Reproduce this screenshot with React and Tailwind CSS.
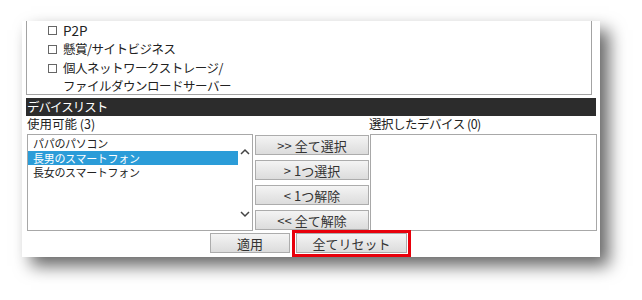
import React from "react";

const font = { fontFamily: '"Noto Sans CJK JP", "Noto Sans", sans-serif' };

const Btn = ({ children, className = "" }) => (
  <div
    className={
      "flex items-center justify-center border border-[#acacac] bg-gradient-to-b from-[#f4f4f4] to-[#dcdcdc] text-[13px] leading-none text-[#333] " +
      className
    }
  >
    {children}
  </div>
);

const Check = ({ children }) => (
  <div className="flex h-[19px] items-center">
    <span className="mr-[6px] inline-block h-[9px] w-[9px] border border-[#666] bg-white" />
    <span>{children}</span>
  </div>
);

const Chevron = ({ up }) => (
  <svg width="10" height="7" viewBox="0 0 10 7" className="block">
    <path
      d={up ? "M1 6 L5 2 L9 6" : "M1 1 L5 5 L9 1"}
      fill="none"
      stroke="#444"
      strokeWidth="1.5"
    />
  </svg>
);

export default function App() {
  return (
    <div className="h-[300px] w-[642px] bg-white pl-[22px] pt-[21px]" style={font}>
      <div className="flex h-[236px] w-[578px] flex-col bg-white shadow-[9px_9px_16px_rgba(0,0,0,0.6)]">
        {/* チェック項目 */}
        <div className="ml-[4px] h-[74px] w-[566px] border-x border-b border-[#a3a3a3] pl-[21px] text-[12.5px] tracking-[-0.5px] text-[#222]">
          <Check>
            <span className="text-[13.5px] tracking-normal">P2P</span>
          </Check>
          <Check>懸賞/サイトビジネス</Check>
          <div className="flex">
            <span className="mr-[6px] mt-[5px] inline-block h-[9px] w-[9px] border border-[#666] bg-white" />
            <div>
              <div className="flex h-[19px] items-center">個人ネットワークストレージ/</div>
              <div className="flex h-[17px] items-center">ファイルダウンロードサーバー</div>
            </div>
          </div>
        </div>

        {/* デバイスリスト */}
        <div className="ml-[4px] mt-[3px] flex h-[18px] w-[570px] items-center bg-[#2c2c2c] pl-[1px] text-[12.5px] tracking-[-1px] text-white">
          デバイスリスト
        </div>

        <div className="ml-[5px] flex h-[17px] items-center text-[12.5px] text-[#222]">
          <span className="w-[342px]">使用可能 (3)</span>
          <span className="tracking-[-0.5px]">選択したデバイス (0)</span>
        </div>

        <div className="ml-[5px] mt-[1px] flex h-[97px]">
          {/* 使用可能リスト */}
          <div className="flex w-[226px] border border-[#a8a8a8] bg-white text-[11px] tracking-[-0.3px] text-[#222]">
            <div className="flex-1 pt-[1px]">
              <div className="flex h-[15px] items-center pl-[5px]">パパのパソコン</div>
              <div className="flex h-[14px] items-center bg-[#2b9cd8] pl-[5px] text-white">長男のスマートフォン</div>
              <div className="flex h-[15px] items-center pl-[5px]">長女のスマートフォン</div>
            </div>
            <div className="flex w-[14px] flex-col items-center justify-between pb-[12px] pt-[13px]">
              <Chevron up />
              <Chevron />
            </div>
          </div>

          {/* 操作ボタン */}
          <div className="ml-[2px] flex w-[114px] flex-col gap-[5px] pt-[1px]">
            <Btn className="h-[20px]">&gt;&gt; 全て選択</Btn>
            <Btn className="h-[20px]">&gt; 1つ選択</Btn>
            <Btn className="h-[20px]">&lt; 1つ解除</Btn>
            <Btn className="h-[20px]">&lt;&lt; 全て解除</Btn>
          </div>

          {/* 選択したデバイス */}
          <div className="ml-[1px] w-[227px] border border-[#a8a8a8] bg-white" />
        </div>

        <div className="flex h-[24px] items-center">
          <Btn className="ml-[188px] h-[20px] w-[80px]">適用</Btn>
          <div className="ml-[2px] flex h-[27px] w-[119px] items-center justify-center border-[3px] border-[#e8000b]">
            <Btn className="h-[20px] w-[111px]">全てリセット</Btn>
          </div>
        </div>
      </div>
    </div>
  );
}
